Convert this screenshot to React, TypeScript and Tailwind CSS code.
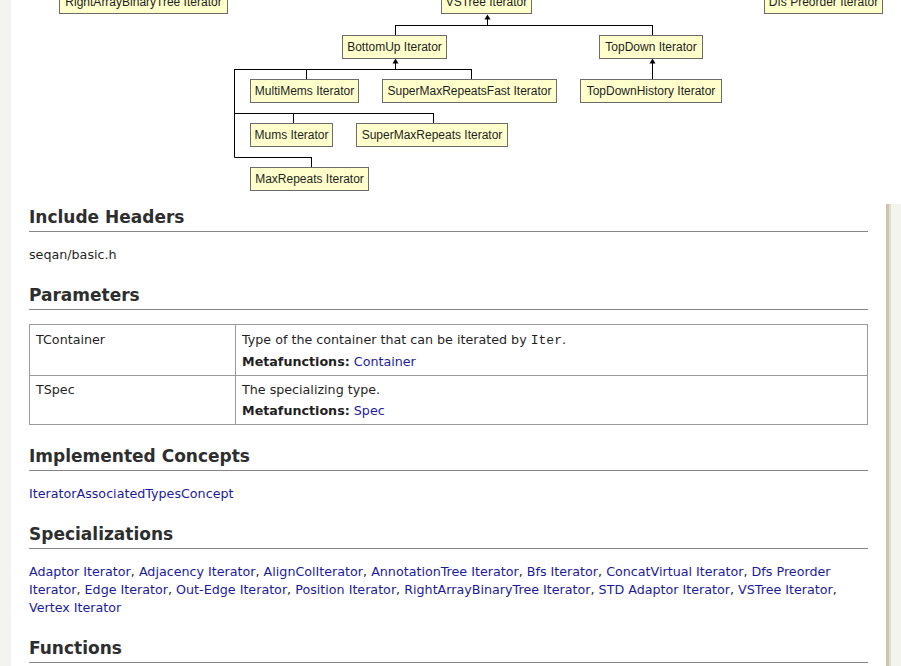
import React from 'react';

type Node = { label: string; x: number; y: number; w: number };

// page coordinates (x measured from window left edge)
const nodes: Node[] = [
  { label: 'RightArrayBinaryTree Iterator', x: 59, y: -10, w: 169 },
  { label: 'VSTree Iterator', x: 441, y: -10, w: 91 },
  { label: 'Dfs Preorder Iterator', x: 764, y: -10, w: 119 },
  { label: 'BottomUp Iterator', x: 342, y: 35, w: 105 },
  { label: 'TopDown Iterator', x: 599, y: 35, w: 104 },
  { label: 'MultiMems Iterator', x: 250, y: 79, w: 109 },
  { label: 'SuperMaxRepeatsFast Iterator', x: 382, y: 79, w: 175 },
  { label: 'TopDownHistory Iterator', x: 580, y: 79, w: 142 },
  { label: 'Mums Iterator', x: 250, y: 123, w: 83 },
  { label: 'SuperMaxRepeats Iterator', x: 356, y: 123, w: 152 },
  { label: 'MaxRepeats Iterator', x: 250, y: 167, w: 119 },
];

const OFFSET = 11;

function Arrow({ x, y }: { x: number; y: number }) {
  return <polygon points={`${x},${y} ${x - 3},${y + 5} ${x + 3},${y + 5}`} fill="#000" />;
}

function Diagram() {
  return (
    <div className="relative h-[204px] bg-white">
      <svg className="absolute left-0 top-0" width={890} height={204} viewBox="11 0 890 204">
        <g stroke="#000" strokeWidth={1} fill="none">
          <path d="M487.5 19 V25.5 M395.5 25.5 H652.5 M395.5 25 V35 M652.5 25 V35" />
          <path d="M395.5 63 V69.5 M234.5 69.5 H471.5 M306.5 69 V79 M471.5 69 V79" />
          <path d="M234.5 69 V157.5 M234.5 113.5 H433.5 M293.5 113 V123 M433.5 113 V123" />
          <path d="M234.5 157.5 H311.5 M311.5 157 V167" />
          <path d="M652.5 63 V79" />
        </g>
        <Arrow x={487.5} y={14.5} />
        <Arrow x={395.5} y={58.5} />
        <Arrow x={652.5} y={58.5} />
      </svg>
      {nodes.map((n) => (
        <div
          key={n.label}
          className="absolute flex h-[24px] items-center justify-center border border-[#6b6b6b] bg-[#ffffcc] font-['Liberation_Sans',sans-serif] text-[12px] whitespace-nowrap text-[#1e1e1e]"
          style={{ left: n.x - OFFSET, top: n.y, width: n.w }}
        >
          {n.label}
        </div>
      ))}
    </div>
  );
}

function H2({ children, className = '' }: { children: React.ReactNode; className?: string }) {
  return (
    <h2
      className={`border-b border-[#858585] pb-[3px] text-[17px] leading-[22px] font-bold text-[#2e2e2e] ${className}`}
    >
      {children}
    </h2>
  );
}

function A({ children }: { children: React.ReactNode }) {
  return <a className="text-[#1b1b9c]">{children}</a>;
}

const specs = [
  'Adaptor Iterator',
  'Adjacency Iterator',
  'AlignColIterator',
  'AnnotationTree Iterator',
  'Bfs Iterator',
  'ConcatVirtual Iterator',
];
const specs2 = [
  'Edge Iterator',
  'Out-Edge Iterator',
  'Position Iterator',
  'RightArrayBinaryTree Iterator',
  'STD Adaptor Iterator',
  'VSTree Iterator',
];

export default function App() {
  return (
    <div className="flex h-[666px] w-[901px] overflow-hidden bg-[#f4f4ef] font-['DejaVu_Sans',sans-serif] text-[12.7px] text-[#1f1f1f]">
      <div className="w-[11px] shrink-0 bg-[#f3f3ef]" />
      <div className="flex flex-1 flex-col">
        <Diagram />
        <div className="flex flex-1">
          <main className="w-[875px] shrink-0 bg-white pr-[18px] pl-[18px] pt-[2px]">
            <H2>Include Headers</H2>
            <p className="mt-[14px] leading-[18px]">seqan/basic.h</p>

            <H2 className="mt-[20px]">Parameters</H2>
            <table className="mt-[14px] w-full border-collapse leading-[18px]">
              <tbody>
                <tr>
                  <td className="w-[206px] border border-[#9a9a9a] px-[6px] pt-[6px] pb-[4px] align-top">TContainer</td>
                  <td className="border border-[#9a9a9a] px-[6px] pt-[6px] pb-[4px] align-top">
                    <div>
                      Type of the container that can be iterated by{' '}
                      <code className="font-['Liberation_Mono',monospace] text-[13px]">Iter</code>.
                    </div>
                    <div className="mt-[3px]">
                      <b>Metafunctions:</b> <A>Container</A>
                    </div>
                  </td>
                </tr>
                <tr>
                  <td className="border border-[#9a9a9a] px-[6px] pt-[5px] pb-[4px] align-top">TSpec</td>
                  <td className="border border-[#9a9a9a] px-[6px] pt-[5px] pb-[4px] align-top">
                    <div>The specializing type.</div>
                    <div className="mt-[3px]">
                      <b>Metafunctions:</b> <A>Spec</A>
                    </div>
                  </td>
                </tr>
              </tbody>
            </table>

            <H2 className="mt-[20px]">Implemented Concepts</H2>
            <p className="mt-[14px] leading-[18px]">
              <A>IteratorAssociatedTypesConcept</A>
            </p>

            <H2 className="mt-[20px]">Specializations</H2>
            <p className="mt-[14px] leading-[18px]">
              {specs.map((s) => (
                <React.Fragment key={s}>
                  <A>{s}</A>,{' '}
                </React.Fragment>
              ))}
              <A>
                Dfs Preorder
                <br />
                Iterator
              </A>
              ,{' '}
              {specs2.map((s) => (
                <React.Fragment key={s}>
                  <A>{s}</A>,{' '}
                </React.Fragment>
              ))}
              <br />
              <A>Vertex Iterator</A>
            </p>

            <H2 className="mt-[20px]">Functions</H2>
          </main>
          <div className="w-[3px] shrink-0 bg-[#cdc3ae]" />
          <div className="w-[2px] shrink-0 bg-[#e3ddcf]" />
          <div className="flex-1 bg-[#f4f4ef]" />
        </div>
      </div>
    </div>
  );
}
